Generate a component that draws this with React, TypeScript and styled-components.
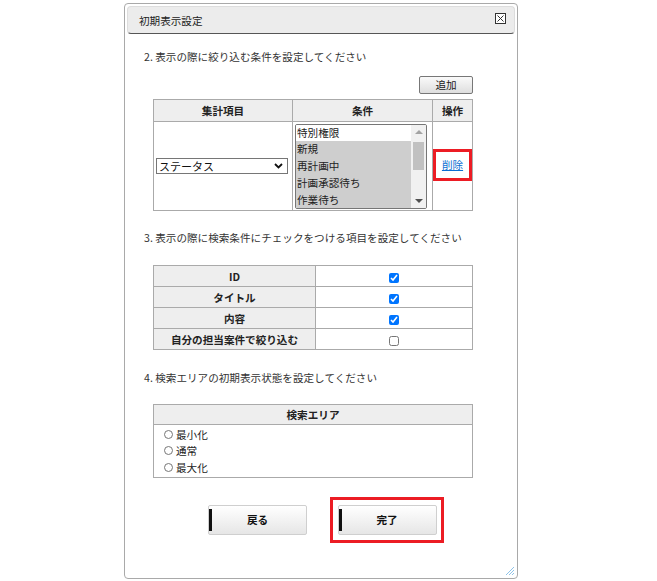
import styled, { createGlobalStyle } from 'styled-components';

const GlobalStyle = createGlobalStyle`
  body {
    margin: 0;
    background: #fff;
    font-family: "Noto Sans CJK JP", "Noto Sans", sans-serif;
    font-size: 10.6px;
    color: #333;
  }
`;

const Page = styled.div`
  padding: 3px 0 0 124px;
`;

const Dialog = styled.div`
  position: relative;
  box-sizing: border-box;
  width: 394px;
  height: 576px;
  border: 1px solid #a9a9a9;
  border-radius: 4px;
  padding: 2px;
  background: #fff;
`;

const TitleBar = styled.div`
  box-sizing: border-box;
  height: 28px;
  display: flex;
  align-items: center;
  justify-content: space-between;
  padding: 0 8px 0 11px;
  background: #ececec;
  border: 1px solid #dddddd;
  border-bottom: 1px solid #555;
  border-radius: 4px;
  color: #222;
`;

const CloseBox = styled.svg`
  width: 11px;
  height: 11px;
  margin-top: -3px;
`;

const Content = styled.div`
  padding-left: 17px;
`;

const SectionText = styled.div<{ $top: number }>`
  margin-top: ${p => p.$top}px;
  line-height: 16px;
`;

const Block = styled.div<{ $top: number }>`
  margin: ${p => p.$top}px 0 0 9px;
  width: 320px;
`;

const AddRow = styled.div`
  display: flex;
  justify-content: flex-end;
  margin-top: 11px;
  width: 329px;
`;

const SmallButton = styled.button`
  box-sizing: border-box;
  width: 54px;
  height: 18px;
  padding: 0;
  border: 1px solid #777;
  border-radius: 2px;
  background: linear-gradient(#fafafa, #dedede);
  font: inherit;
  color: #222;
  line-height: 14px;
`;

const Table = styled.table`
  width: 320px;
  border-collapse: collapse;
  table-layout: fixed;
`;

const Th = styled.th<{ $w?: number; $h: number }>`
  ${p => (p.$w ? `width: ${p.$w}px;` : '')}
  height: ${p => p.$h}px;
  padding: 0;
  border: 1px solid #aaa;
  background: #eeeeee;
  font-weight: bold;
  color: #222;
  text-align: center;
`;

const Td = styled.td<{ $h?: number; $center?: boolean }>`
  ${p => (p.$h ? `height: ${p.$h}px;` : '')}
  padding: 0;
  border: 1px solid #aaa;
  text-align: ${p => (p.$center ? 'center' : 'left')};
  vertical-align: middle;
`;

const FakeSelect = styled.div`
  box-sizing: border-box;
  margin-left: 2px;
  width: 132px;
  height: 16px;
  border: 1px solid #767676;
  display: flex;
  align-items: center;
  justify-content: space-between;
  padding: 0 4px 0 2px;
  color: #111;
  font-size: 11px;
  line-height: 14px;
`;

const ListBox = styled.div`
  box-sizing: border-box;
  margin-left: 2px;
  width: 132px;
  height: 85px;
  border: 1px solid #767676;
  border-radius: 2px;
  display: flex;
  overflow: hidden;
`;

const Options = styled.div`
  flex: 1;
  overflow: hidden;
`;

const Option = styled.div<{ $selected?: boolean }>`
  height: 16.8px;
  line-height: 16.8px;
  padding-left: 1px;
  background: ${p => (p.$selected ? '#cecece' : '#fff')};
  color: #222;
  white-space: nowrap;
`;

const ScrollTrack = styled.div`
  width: 15px;
  background: #f1f1f1;
  display: flex;
  flex-direction: column;
  align-items: center;
`;

const ScrollArrow = styled.div<{ $down?: boolean }>`
  height: 14px;
  width: 15px;
  display: flex;
  align-items: center;
  justify-content: center;
  &::before {
    content: '';
    border-left: 4px solid transparent;
    border-right: 4px solid transparent;
    ${p =>
      p.$down ? 'border-top: 4px solid #505050;' : 'border-bottom: 4px solid #a3a3a3;'}
  }
`;

const ScrollThumb = styled.div`
  width: 11px;
  height: 28px;
  margin-top: 3px;
  background: #c1c1c1;
  flex: none;
`;

const ScrollSpacer = styled.div`
  flex: 1;
`;

const Highlight = styled.div<{ $w: number; $h: number }>`
  box-sizing: border-box;
  width: ${p => p.$w}px;
  height: ${p => p.$h}px;
  border: 3px solid #ec1c24;
  display: flex;
  align-items: center;
  justify-content: center;
`;

const OpCell = styled.div`
  display: flex;
  justify-content: center;
  margin-top: -3px;
`;

const DeleteLink = styled.a`
  color: #0b6fd3;
  text-decoration: underline;
  cursor: pointer;
`;

const Check = styled.input`
  width: 10px;
  height: 10px;
  margin: 0;
  vertical-align: middle;
  accent-color: #0075ff;
`;

const RadioList = styled.div`
  display: flex;
  flex-direction: column;
  padding: 1px 0 1px 10px;
`;

const RadioLine = styled.label`
  display: flex;
  align-items: center;
  gap: 3px;
  height: 16.5px;
  color: #222;
`;

const Radio = styled.input`
  width: 9px;
  height: 9px;
  margin: 0;
`;

const ButtonRow = styled.div`
  display: flex;
  align-items: center;
  gap: 23px;
  margin: 19px 0 0 81px;
`;

const MainButton = styled.button`
  position: relative;
  box-sizing: border-box;
  width: 99px;
  height: 30px;
  padding: 0;
  border: 1px solid #cfcfcf;
  border-radius: 2px;
  background: linear-gradient(#ffffff, #e6e6e6);
  font: inherit;
  font-weight: bold;
  color: #111;
  &::before {
    content: '';
    position: absolute;
    left: 0;
    top: 3px;
    bottom: 3px;
    width: 3px;
    background: #111;
  }
`;

const Grip = styled.svg`
  position: absolute;
  right: 2px;
  bottom: 2px;
  width: 11px;
  height: 11px;
`;

const statusOptions = [
  { label: '特別権限', selected: false },
  { label: '新規', selected: true },
  { label: '再計画中', selected: true },
  { label: '計画承認待ち', selected: true },
  { label: '作業待ち', selected: true },
];

const checkRows = [
  { label: 'ID', checked: true },
  { label: 'タイトル', checked: true },
  { label: '内容', checked: true },
  { label: '自分の担当案件で絞り込む', checked: false },
];

const areaModes = ['最小化', '通常', '最大化'];

const App: React.FC = () => {
  return (
    <>
      <GlobalStyle />
      <Page>
        <Dialog>
          <TitleBar>
            <span>初期表示設定</span>
            <CloseBox viewBox="0 0 11 11">
              <rect x="0.5" y="0.5" width="10" height="10" fill="#fff" stroke="#333" />
              <path d="M2.5 2.5 L8.5 8.5 M8.5 2.5 L2.5 8.5" stroke="#333" strokeWidth="1" />
            </CloseBox>
          </TitleBar>

          <Content>
            <SectionText $top={15}>2. 表示の際に絞り込む条件を設定してください</SectionText>
            <AddRow>
              <SmallButton>追加</SmallButton>
            </AddRow>
            <Block $top={5}>
              <Table>
                <thead>
                  <tr>
                    <Th $w={138} $h={21}>集計項目</Th>
                    <Th $w={139} $h={21}>条件</Th>
                    <Th $h={21}>操作</Th>
                  </tr>
                </thead>
                <tbody>
                  <tr>
                    <Td $h={88}>
                      <FakeSelect>
                        <span>ステータス</span>
                        <svg width="9" height="6" viewBox="0 0 9 6">
                          <path d="M1 1 L4.5 4.5 L8 1" fill="none" stroke="#111" strokeWidth="1.8" />
                        </svg>
                      </FakeSelect>
                    </Td>
                    <Td>
                      <ListBox>
                        <Options>
                          {statusOptions.map(o => (
                            <Option key={o.label} $selected={o.selected}>
                              {o.label}
                            </Option>
                          ))}
                        </Options>
                        <ScrollTrack>
                          <ScrollArrow />
                          <ScrollThumb />
                          <ScrollSpacer />
                          <ScrollArrow $down />
                        </ScrollTrack>
                      </ListBox>
                    </Td>
                    <Td>
                      <OpCell>
                        <Highlight $w={40} $h={32}>
                          <DeleteLink>削除</DeleteLink>
                        </Highlight>
                      </OpCell>
                    </Td>
                  </tr>
                </tbody>
              </Table>
            </Block>

            <SectionText $top={19}>3. 表示の際に検索条件にチェックをつける項目を設定してください</SectionText>
            <Block $top={19}>
              <Table>
                <tbody>
                  {checkRows.map(r => (
                    <tr key={r.label}>
                      <Th $w={161} $h={20}>{r.label}</Th>
                      <Td $center>
                        <Check type="checkbox" defaultChecked={r.checked} />
                      </Td>
                    </tr>
                  ))}
                </tbody>
              </Table>
            </Block>

            <SectionText $top={20}>4. 検索エリアの初期表示状態を設定してください</SectionText>
            <Block $top={18}>
              <Table>
                <thead>
                  <tr>
                    <Th $h={19}>検索エリア</Th>
                  </tr>
                </thead>
                <tbody>
                  <tr>
                    <Td>
                      <RadioList>
                        {areaModes.map(m => (
                          <RadioLine key={m}>
                            <Radio type="radio" name="area" />
                            {m}
                          </RadioLine>
                        ))}
                      </RadioList>
                    </Td>
                  </tr>
                </tbody>
              </Table>
            </Block>
          </Content>

          <ButtonRow>
            <MainButton>戻る</MainButton>
            <Highlight $w={114} $h={46}>
              <MainButton>完了</MainButton>
            </Highlight>
          </ButtonRow>

          <Grip viewBox="0 0 11 11">
            <path d="M10 2 L2 10 M10 5 L5 10 M10 8 L8 10" stroke="#8fc3e8" strokeWidth="1" />
          </Grip>
        </Dialog>
      </Page>
    </>
  );
};

export default App;
